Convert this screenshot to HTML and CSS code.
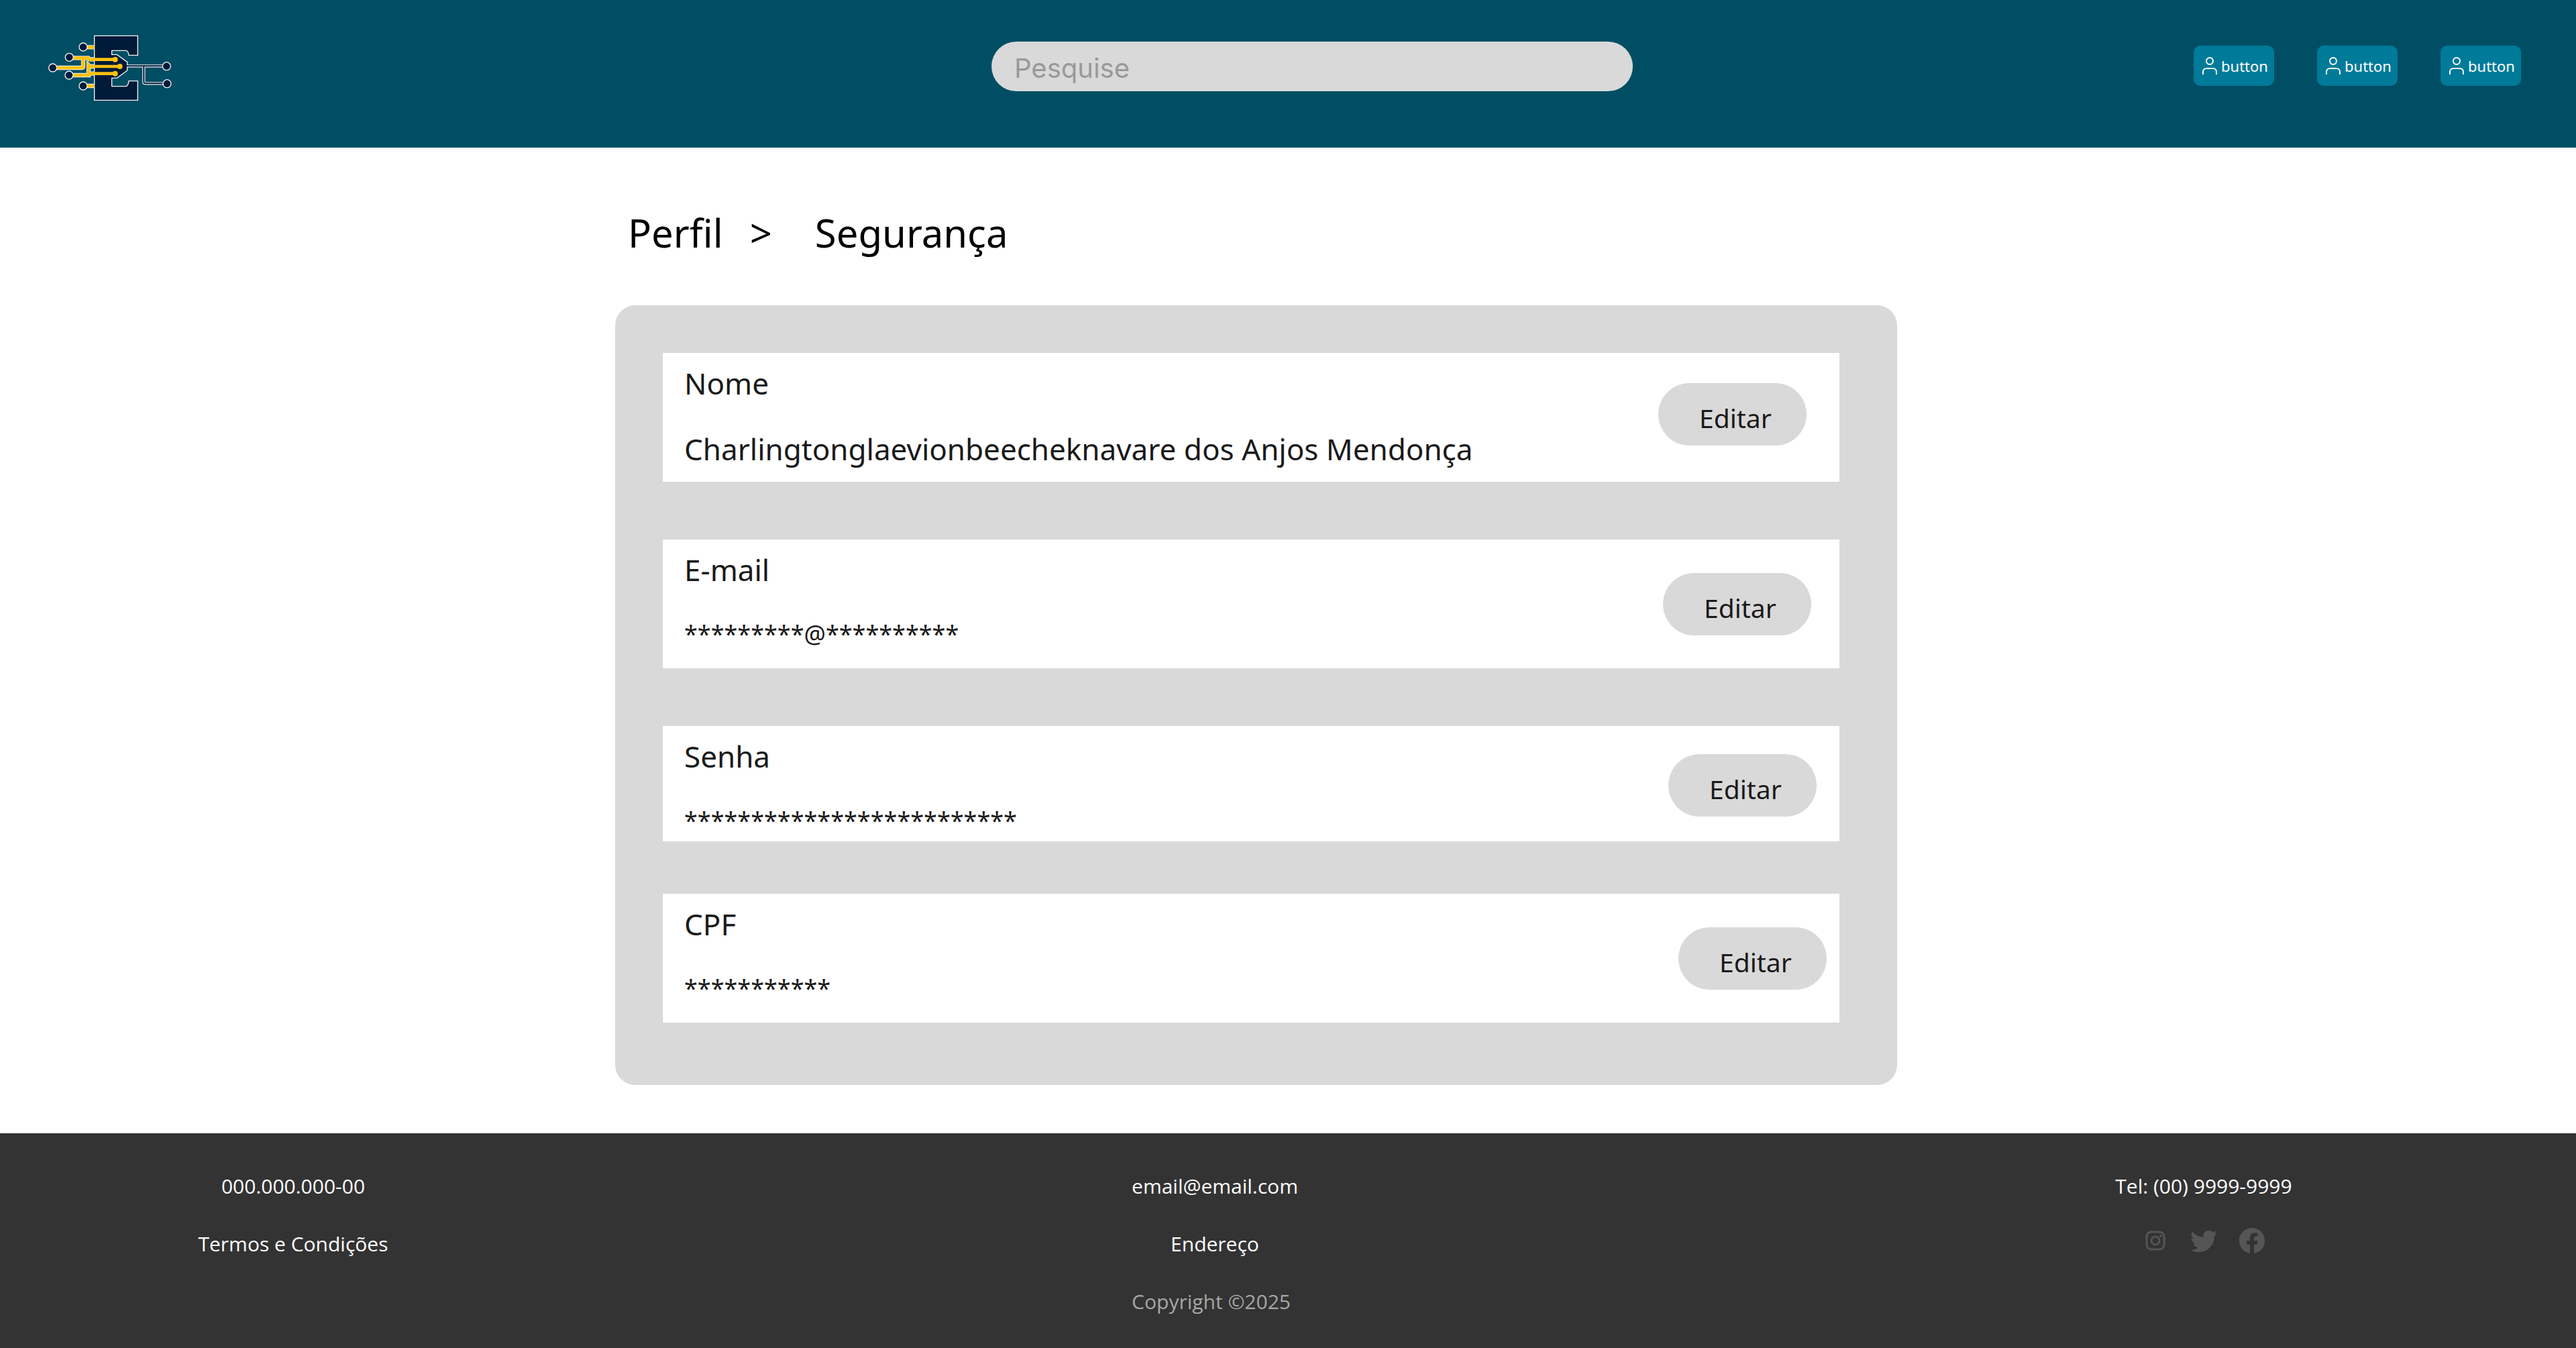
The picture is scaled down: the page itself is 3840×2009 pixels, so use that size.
FILE: index.html
```html
<!DOCTYPE html>
<html lang="pt-BR">
<head>
  <meta charset="utf-8">
  <meta name="viewport" content="width=device-width, initial-scale=1">
  <title>Perfil - Segurança</title>
  <link rel="stylesheet" href="styles.css">
</head>
<body>
  <svg class="sprite" aria-hidden="true">
    <symbol id="icon-user" viewBox="0 0 22 26">
      <circle cx="11" cy="6" r="5"/>
      <path d="M1 26v-4a5 5 0 0 1 5-5h10a5 5 0 0 1 5 5v4"/>
    </symbol>
  </svg>

  <header class="topbar">
    <a class="logo" href="#" aria-label="Início">
      <svg class="logo-mark" viewBox="60 57 564 306" aria-hidden="true">
        <g class="trace-outline">
          <path d="M235 124H275M172 172H245L250 178H275M97 216H215Q222 216 222 209V176M170 249H246V204L252 210H275M246 242H275M235 297H275"/>
          <path class="trace-thin" d="M415 208H580M493 208V279Q493 286 500 286H582"/>
        </g>
        <path class="letter" d="M272 73H466V160H426Q423 139 414 139H350V157H373L419 190V228L373 262H350V299H414Q423 297 426 275H466V361H272Z"/>
        <path class="trace-navy" d="M415 208H580M493 208V279Q493 286 500 286H582"/>
        <path class="trace-gold" d="M235 124H272M172 172H245L250 179H365M97 216H215Q222 216 222 209V176M170 249H246V204L252 210H386M246 242H365M235 297H272"/>
        <g class="gold-dots">
          <circle cx="365" cy="179" r="12"/><circle cx="386" cy="210" r="12"/><circle cx="365" cy="242" r="12"/>
        </g>
        <g class="nodes">
          <circle cx="222" cy="123" r="18"/><circle cx="160" cy="169" r="18"/><circle cx="86" cy="216" r="18"/>
          <circle cx="159" cy="249" r="18"/><circle cx="222" cy="297" r="18"/>
          <circle cx="595" cy="209" r="18"/><circle cx="597" cy="287" r="18"/>
        </g>
      </svg>
    </a>
    <form class="search" role="search">
      <input class="search-input" type="search" placeholder="Pesquise" aria-label="Pesquise">
    </form>
    <nav class="actions" aria-label="Ações">
      <button class="action" type="button"><svg class="action-icon" aria-hidden="true"><use href="#icon-user"/></svg>button</button>
      <button class="action" type="button"><svg class="action-icon" aria-hidden="true"><use href="#icon-user"/></svg>button</button>
      <button class="action" type="button"><svg class="action-icon" aria-hidden="true"><use href="#icon-user"/></svg>button</button>
    </nav>
  </header>

  <main class="page">
    <nav class="breadcrumb" aria-label="Navegação">
      <a class="crumb" href="#">Perfil</a>
      <span class="crumb-separator">&gt;</span>
      <h1 class="crumb">Segurança</h1>
    </nav>

    <section class="panel">
      <article class="field field-name">
        <div class="field-text">
          <h2 class="field-label">Nome</h2>
          <p class="field-value">Charlingtonglaevionbeecheknavare dos Anjos Mendonça</p>
        </div>
        <button class="edit" type="button">Editar</button>
      </article>
      <article class="field field-email">
        <div class="field-text">
          <h2 class="field-label">E-mail</h2>
          <p class="field-value masked">*********@**********</p>
        </div>
        <button class="edit" type="button">Editar</button>
      </article>
      <article class="field field-password">
        <div class="field-text">
          <h2 class="field-label">Senha</h2>
          <p class="field-value masked">*************************</p>
        </div>
        <button class="edit" type="button">Editar</button>
      </article>
      <article class="field field-cpf">
        <div class="field-text">
          <h2 class="field-label">CPF</h2>
          <p class="field-value masked">***********</p>
        </div>
        <button class="edit" type="button">Editar</button>
      </article>
    </section>
  </main>

  <footer class="footer">
    <div class="footer-column">
      <p>000.000.000-00</p>
      <a href="#">Termos e Condições</a>
    </div>
    <div class="footer-column">
      <a href="#">email@email.com</a>
      <p>Endereço</p>
      <p class="copyright">Copyright ©2025</p>
    </div>
    <div class="footer-column footer-contact">
      <p>Tel: (00) 9999-9999</p>
      <div class="social">
        <a href="#" aria-label="Instagram">
          <svg class="social-icon" viewBox="0 0 46 46">
            <rect class="line" x="10" y="10" width="26" height="26" rx="7"/>
            <circle class="line" cx="23" cy="23" r="6"/>
            <circle cx="31" cy="16" r="2"/>
          </svg>
        </a>
        <a href="#" aria-label="Twitter">
          <svg class="social-icon" viewBox="0 0 24 24"><path d="M22.46,6C21.69,6.35 20.86,6.58 20,6.69C20.88,6.16 21.56,5.32 21.88,4.31C21.05,4.81 20.13,5.16 19.16,5.36C18.37,4.5 17.26,4 16,4C13.65,4 11.73,5.92 11.73,8.29C11.73,8.63 11.77,8.96 11.84,9.27C8.28,9.09 5.11,7.38 3,4.79C2.63,5.42 2.42,6.16 2.42,6.94C2.42,8.43 3.17,9.75 4.33,10.5C3.62,10.5 2.96,10.3 2.38,10C2.38,10 2.38,10 2.38,10.03C2.38,12.11 3.86,13.85 5.82,14.24C5.46,14.34 5.08,14.39 4.69,14.39C4.42,14.39 4.15,14.36 3.89,14.31C4.43,16 6,17.26 7.89,17.29C6.43,18.45 4.58,19.13 2.56,19.13C2.22,19.13 1.88,19.11 1.54,19.07C3.44,20.29 5.7,21 8.12,21C16,21 20.33,14.46 20.33,8.79C20.33,8.6 20.33,8.42 20.32,8.23C21.16,7.63 21.88,6.87 22.46,6Z"/></svg>
        </a>
        <a href="#" aria-label="Facebook">
          <svg class="social-icon" viewBox="0 0 24 24"><path d="M12 2.04C6.5 2.04 2 6.53 2 12.06C2 17.06 5.66 21.21 10.44 21.96V14.96H7.9V12.06H10.44V9.85C10.44 7.34 11.93 5.96 14.22 5.96C15.31 5.96 16.45 6.15 16.45 6.15V8.62H15.19C13.95 8.62 13.56 9.39 13.56 10.18V12.06H16.34L15.89 14.96H13.56V21.96A10 10 0 0 0 22 12.06C22 6.53 17.5 2.04 12 2.04Z"/></svg>
        </a>
      </div>
    </div>
  </footer>
</body>
</html>
```
FILE: styles.css
```css
* {
  box-sizing: border-box;
}

body {
  margin: 0;
  background: #fff;
  color: #1a1a1a;
  font-family: "Noto Sans", sans-serif;
}

h1, h2, p {
  margin: 0;
  font-weight: 400;
}

a {
  color: inherit;
  text-decoration: none;
}

button, input {
  border: 0;
  font: inherit;
}

.sprite {
  display: none;
}

/* Top bar */
.topbar {
  display: grid;
  grid-template-columns: 1408fr 956fr 1324fr;
  align-items: center;
  padding: 48px 82px 70px 70px;
  background: #004e64;
}

.logo {
  justify-self: start;
}

.logo-mark {
  display: block;
  width: 188px;
  height: 102px;
  fill: none;
}

.trace-outline {
  stroke: #f4f4f4;
  stroke-width: 19;
}

.trace-thin {
  stroke-width: 13;
}

.letter {
  fill: #001a3a;
  stroke: #f4f4f4;
  stroke-width: 4;
}

.trace-navy {
  stroke: #001a3a;
  stroke-width: 6;
}

.trace-gold {
  stroke: #fdc010;
  stroke-width: 14;
}

.gold-dots {
  fill: #fdc010;
}

.nodes {
  fill: #001a3a;
  stroke: #f4f4f4;
  stroke-width: 4;
}

.search-input {
  display: block;
  width: 100%;
  height: 74px;
  padding: 4px 34px 0;
  border-radius: 37px;
  background: #d9d9d9;
  color: #1a1a1a;
  font-family: Inter, sans-serif;
  font-size: 40px;
}

.search-input::placeholder {
  color: #999;
}

.actions {
  display: flex;
  justify-content: flex-end;
  gap: 64px;
  padding-bottom: 2px;
}

.action {
  display: flex;
  align-items: center;
  gap: 6px;
  width: 120px;
  height: 60px;
  padding: 0 0 0 13px;
  border-radius: 10px;
  background: #007a99;
  color: #fff;
  font-family: "Noto Sans", sans-serif;
  font-size: 22px;
}

.action-icon {
  flex: none;
  width: 22px;
  height: 26px;
  fill: none;
  stroke: #fff;
  stroke-width: 2;
}

/* Profile page */
.page {
  display: grid;
  grid-template-columns: 917fr 1911fr 1012fr;
  row-gap: 68px;
  padding: 87px 0 72px;
}

.breadcrumb,
.panel {
  grid-column: 2;
}

.breadcrumb {
  display: flex;
  padding-left: 19px;
  color: #000;
}

.crumb,
.crumb-separator {
  font-size: 58px;
  line-height: 80px;
}

.crumb-separator {
  margin: 0 64px 0 40px;
}

.panel {
  display: flex;
  flex-direction: column;
  gap: 86px;
  padding: 71px 86px 93px 71px;
  border-radius: 30px;
  background: #d9d9d9;
}

.field {
  display: flex;
  align-items: center;
  justify-content: space-between;
  padding-left: 32px;
  background: #fff;
}

.field-name {
  padding-right: 49px;
}

.field-email {
  padding-right: 42px;
}

.field-password {
  padding-right: 34px;
}

.field-cpf {
  margin-top: -8px;
  padding-right: 19px;
}

.field-text {
  display: flex;
  flex-direction: column;
  gap: 40px;
  padding: 16px 0 20px;
}

.field-password .field-text {
  padding-bottom: 0;
}

.field-label,
.field-value {
  font-size: 44px;
  line-height: 58px;
}

.field-value.masked {
  padding-bottom: 4px;
  font-size: 36px;
  line-height: 54px;
}

.edit {
  width: 221px;
  height: 93px;
  padding: 10px 0 0 61px;
  border-radius: 47px;
  background: #d9d9d9;
  color: #1a1a1a;
  font-size: 39px;
  text-align: left;
}

.field-name .edit {
  margin-bottom: 10px;
}

.field-password .edit {
  margin-top: 4px;
}

/* Footer */
.footer {
  display: grid;
  grid-template-columns: 874fr 1874fr 1074fr;
  padding: 59px 18px 49px 0;
  background: #333;
  color: #fff;
  font-family: "Open Sans", sans-serif;
  font-size: 30px;
  line-height: 40px;
}

.footer-column {
  display: flex;
  flex-direction: column;
  align-items: center;
  justify-self: center;
  gap: 46px;
}

.footer-contact {
  gap: 38px;
}

.copyright {
  align-self: flex-start;
  color: #a6a6a6;
}

.social {
  display: flex;
  gap: 26px;
}

.social-icon {
  display: block;
  width: 46px;
  height: 46px;
  fill: #555;
}

.social-icon .line {
  fill: none;
  stroke: #555;
  stroke-width: 3;
}
```
